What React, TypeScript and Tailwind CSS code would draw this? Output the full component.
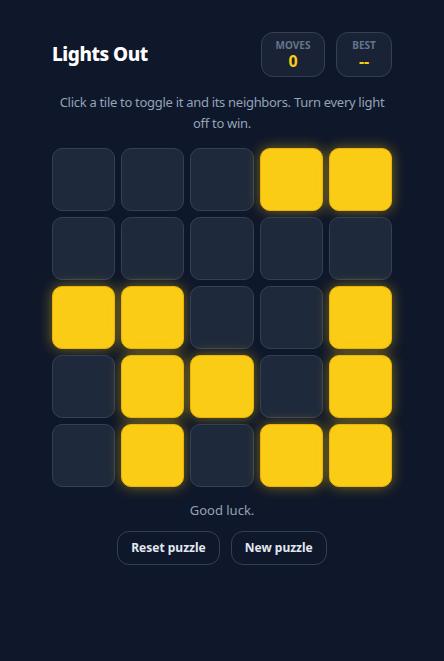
import React, { useState } from "react";

const initial = [
  [0, 0, 0, 1, 1],
  [0, 0, 0, 0, 0],
  [1, 1, 0, 0, 1],
  [0, 1, 1, 0, 1],
  [0, 1, 0, 1, 1],
];

export default function App() {
  const [grid, setGrid] = useState(initial);
  const [moves, setMoves] = useState(0);

  const toggle = (r: number, c: number) => {
    const g = grid.map((row) => row.slice());
    const flip = (y: number, x: number) => {
      if (y >= 0 && y < 5 && x >= 0 && x < 5) g[y][x] = g[y][x] ? 0 : 1;
    };
    flip(r, c);
    flip(r - 1, c);
    flip(r + 1, c);
    flip(r, c - 1);
    flip(r, c + 1);
    setGrid(g);
    setMoves(moves + 1);
  };

  return (
    <div
      className="min-h-[661px] w-full bg-[#0f172a] flex justify-center"
      style={{ fontFamily: '"Noto Sans", "Open Sans", sans-serif' }}
    >
      <div className="w-[340px] flex flex-col pt-8">
        <div className="flex items-center justify-between">
          <h1 className="text-[19px] font-extrabold text-white tracking-tight">Lights Out</h1>
          <div className="flex gap-[11px]">
            <div className="w-[64px] h-[45px] rounded-xl border border-[#334155] bg-[#1e293b]/70 flex flex-col items-center justify-center">
              <span className="text-[10px] font-bold text-[#64748b] leading-[12px]">MOVES</span>
              <span className="text-[16px] font-bold text-[#facc15] leading-[20px]">{moves}</span>
            </div>
            <div className="w-[56px] h-[45px] rounded-xl border border-[#334155] bg-[#1e293b]/70 flex flex-col items-center justify-center">
              <span className="text-[10px] font-bold text-[#64748b] leading-[12px]">BEST</span>
              <span className="text-[16px] font-bold text-[#facc15] leading-[20px]">--</span>
            </div>
          </div>
        </div>
        <p className="mt-[15px] text-center text-[13px] leading-[21px] text-[#94a3b8] tracking-[-0.3px]">
          Click a tile to toggle it and its neighbors. Turn every light off to win.
        </p>
        <div className="mt-[14px] grid grid-cols-5 gap-[6px]">
          {grid.map((row, r) =>
            row.map((v, c) => (
              <button
                key={`${r}-${c}`}
                onClick={() => toggle(r, c)}
                className={
                  v
                    ? "h-[63px] rounded-[10px] border border-[#eab308] bg-[#facc15] shadow-[0_0_14px_rgba(250,204,21,0.45)]"
                    : "h-[63px] rounded-[10px] border border-[#334155] bg-[#1e293b]"
                }
              />
            ))
          )}
        </div>
        <p className="mt-[14px] text-center text-[13px] text-[#94a3b8]">Good luck.</p>
        <div className="mt-[10px] flex justify-center gap-[11px]">
          <button className="h-[34px] px-[13px] rounded-xl border border-[#334155] text-[12px] font-bold text-[#e2e8f0]">
            Reset puzzle
          </button>
          <button
            onClick={() => {
              setGrid(initial);
              setMoves(0);
            }}
            className="h-[34px] px-[13px] rounded-xl border border-[#334155] text-[12px] font-bold text-[#e2e8f0]"
          >
            New puzzle
          </button>
        </div>
      </div>
    </div>
  );
}
